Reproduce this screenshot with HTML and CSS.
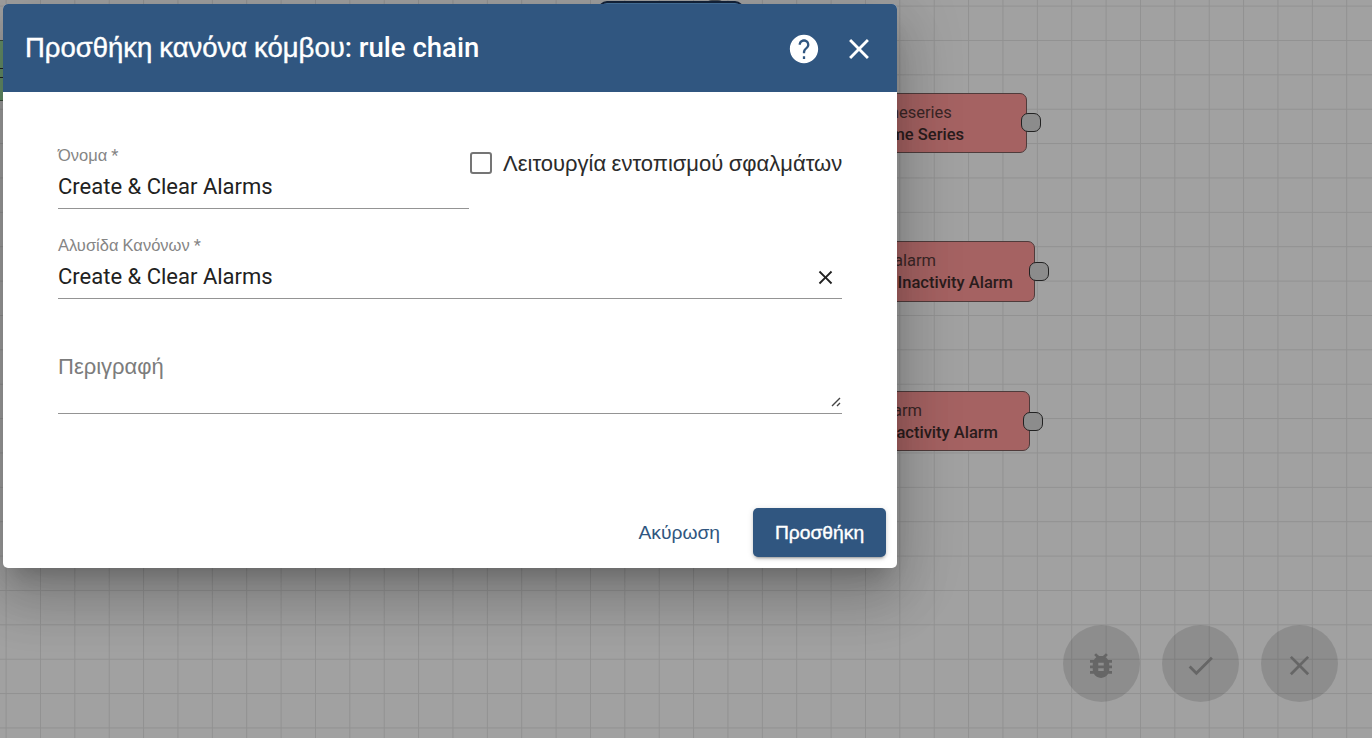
FILE: index.html
```html
<!DOCTYPE html>
<html lang="el">
<head>
<meta charset="utf-8">
<title>Προσθήκη κανόνα κόμβου</title>
<link rel="stylesheet" href="styles.css">
</head>
<body>
<main class="canvas">
  <div class="node node-input"><i class="port"></i></div>
  <div class="node node-top"></div>
  <i class="port port-top"></i>
  <div class="node node-save"><span>save timeseries</span><b>Save Time Series</b><i class="port"></i></div>
  <div class="node node-create"><span>create alarm</span><b>Create Inactivity Alarm</b><i class="port"></i></div>
  <div class="node node-clear"><span>clear alarm</span><b>Clear Inactivity Alarm</b><i class="port"></i></div>
  <div class="fabs">
    <span class="fab"><svg viewBox="0 0 24 24"><path d="M20 8h-2.81c-.45-.78-1.07-1.45-1.82-1.96L17 4.41 15.59 3l-2.17 2.17C12.96 5.06 12.49 5 12 5s-.96.06-1.41.17L8.41 3 7 4.41l1.62 1.63C7.88 6.55 7.26 7.22 6.81 8H4v2h2.09c-.05.33-.09.66-.09 1v1H4v2h2v1c0 .34.04.67.09 1H4v2h2.81c1.04 1.79 2.97 3 5.19 3s4.15-1.21 5.19-3H20v-2h-2.09c.05-.33.09-.66.09-1v-1h2v-2h-2v-1c0-.34-.04-.67-.09-1H20V8zm-6 8h-4v-2h4v2zm0-4h-4v-2h4v2z"/></svg></span>
    <span class="fab"><svg viewBox="0 0 24 24"><path d="M9 16.17L4.83 12l-1.42 1.41L9 19 21 7l-1.41-1.41z"/></svg></span>
    <span class="fab"><svg viewBox="0 0 24 24"><path d="M19 6.41L17.59 5 12 10.59 6.41 5 5 6.41 10.59 12 5 17.59 6.41 19 12 13.41 17.59 19 19 17.59 13.41 12z"/></svg></span>
  </div>
</main>
<section class="dialog">
  <header class="toolbar">
    <h1><span class="greek title-main">Προσθήκη κανόνα κόμβου</span><span class="title-type">: rule chain</span></h1>
    <svg class="help" viewBox="0 0 24 24"><path d="M12 2C6.48 2 2 6.48 2 12s4.48 10 10 10 10-4.48 10-10S17.52 2 12 2zm.8 17h-1.6v-1.8h1.6V19zm2.07-7.75l-.9.92C13.25 12.9 12.8 13.5 12.8 15h-1.6v-.5c0-1.1.45-2.1 1.17-2.83l1.24-1.26c.37-.36.59-.86.59-1.41 0-1.3-1-2.2-2.2-2.2S9.8 7.7 9.8 9H8.2c0-2.21 1.69-3.8 3.8-3.8s3.8 1.59 3.8 3.8c0 .88-.36 1.68-.93 2.25z"/></svg>
    <svg class="close" viewBox="0 0 24 24"><path d="M19 6.41L17.59 5 12 10.59 6.41 5 5 6.41 10.59 12 5 17.59 6.41 19 12 13.41 17.59 19 19 17.59 13.41 12z"/></svg>
  </header>
  <div class="content">
    <div class="row">
      <div class="field name"><label><span class="greek">Όνομα</span> *</label><div class="value">Create &amp; Clear Alarms</div></div>
      <div class="check"><i class="box"></i><span class="greek check-text">Λειτουργία εντοπισμού σφαλμάτων</span></div>
    </div>
    <div class="field chain"><label><span class="greek">Αλυσίδα Κανόνων</span> *</label><div class="value">Create &amp; Clear Alarms<svg viewBox="0 0 24 24"><path d="M19 6.41L17.59 5 12 10.59 6.41 5 5 6.41 10.59 12 5 17.59 6.41 19 12 13.41 17.59 19 19 17.59 13.41 12z"/></svg></div></div>
    <div class="area"><span class="greek area-text">Περιγραφή</span><svg viewBox="0 0 10 10"><path d="M1 9L9 1M6 9L9 6"/></svg></div>
  </div>
  <footer class="actions"><span class="greek cancel">Ακύρωση</span><span class="add"><span class="greek add-text">Προσθήκη</span></span></footer>
</section>
</body>
</html>
```
FILE: styles.css
```css
* { box-sizing: border-box; }
body { margin: 0; font-family: Roboto, "Liberation Sans", sans-serif; overflow: hidden; }
h1 { margin: 0; font-size: 27.5px; font-weight: 500; line-height: 36px; white-space: nowrap; }
svg { display: block; fill: currentColor; }
.greek { font-family: "Liberation Sans", Arial, sans-serif; word-spacing: -.03em; }
.canvas {
  position: relative; width: 1372px; height: 738px; overflow: hidden;
  background-color: #a1a1a1;
  background-image: linear-gradient(90deg, #919191 1.375px, transparent 1.375px), linear-gradient(#919191 1.375px, transparent 1.375px);
  background-size: 34.375px 34.375px;
  background-position: 5.6px 5.6px;
}
.node {
  position: absolute; display: flex; flex-direction: column; justify-content: center;
  align-items: flex-end; height: 61px; border: 1px solid #4f3b3b; border-radius: 7px;
  background: #a56262; color: #2a1c1c; font-size: 16.5px; line-height: 22px; white-space: nowrap;
}
.node span { align-self: flex-start; color: #3a2626; }
.node b { font-weight: 500; }
.port { position: absolute; width: 20px; height: 19px; border: 1.4px solid #222; border-radius: 7px; background: #8c8c8c; }
.node .port { right: -15px; top: 19px; }
.node-save { left: 798px; top: 93px; width: 229px; height: 60px; padding: 1px 62px 0 38px; }
.node-create { left: 794px; top: 241px; width: 241px; padding: 0 21px 0 49px; }
.node-create .port { top: 20px; }
.node-clear { left: 786px; top: 391px; width: 244px; height: 60px; padding: 1px 31px 0 53px; }
.node-clear .port { right: -14px; top: 20px; }
.node-input { left: -100px; top: 40px; width: 140px; background: #67916a; border-color: #3b4e3c; }
.node-input .port { right: 30px; top: 27px; width: 120px; height: 10px; border-radius: 0; background: #67916a; }
.node-top { left: 598px; top: 1px; width: 146px; background: #48739e; border: 2px solid #14233b; border-radius: 9px; }
.port-top { left: 705px; top: -18px; border: 0; background: #4a4f54; }
.fabs { position: absolute; left: 1063px; top: 625px; display: flex; gap: 22px; }
.fab { width: 77px; height: 77px; border-radius: 50%; background: rgba(0,0,0,.12); color: #666; display: flex; align-items: center; justify-content: center; }
.fab svg { width: 33px; height: 33px; transform: translateY(2px); }
.fab:nth-child(1) svg { transform: translate(-.5px, 2px); }
.dialog {
  position: absolute; left: 3px; top: 4px; width: 894px; height: 564px; display: flex; flex-direction: column;
  border-radius: 5px; overflow: hidden; background: #fff; color: #212121;
  box-shadow: 0 15px 21px -10px rgba(0,0,0,.2), 0 33px 52px 4px rgba(0,0,0,.14), 0 12px 63px 11px rgba(0,0,0,.12);
}
.toolbar { height: 88px; flex: none; display: flex; align-items: center; padding: 0 21.5px 0 22px; background: #305680; color: #fff; }
.toolbar h1 { flex: 1; }
.title-main { font-weight: 400; -webkit-text-stroke: .4px currentColor; }
.toolbar svg { width: 34px; height: 34px; margin-top: 2px; }
.toolbar .close { margin-left: 21px; }
.content { flex: 1; padding: 52px 55px 0; }
.row { display: flex; height: 90px; }
.field { height: 65px; border-bottom: 1px solid #949494; }
.name { width: 411px; flex: none; }
.field label { display: block; height: 22px; line-height: 23px; font-size: 16.5px; color: #858585; }
.value { display: flex; justify-content: space-between; height: 42px; line-height: 42px; font-size: 22px; }
.value svg { width: 23px; height: 23px; margin: 10px 5px 0 0; }
.check { display: flex; align-items: center; gap: 11px; height: 38px; margin-left: 1px; font-size: 22px; white-space: nowrap; }
.check-text { padding-top: 2px; color: #2b2b2b; }
.box { width: 22px; height: 22px; border: 2px solid #757575; border-radius: 3px; }
.area { display: flex; justify-content: space-between; align-items: flex-end; height: 65px; margin-top: 50px; border-bottom: 1px solid #949494; color: #7c7c7c; font-size: 22px; }
.area-text { align-self: flex-start; line-height: 36px; }
.area svg { width: 10px; height: 10px; margin: 0 1px 6px 0; stroke: #444; stroke-width: 1.4; }
.actions { display: flex; justify-content: flex-end; align-items: center; height: 49px; flex: none; margin: 0 11px 11px; font-size: 19.25px; color: #305680; }
.cancel { margin-right: 33px; }
.add { width: 133px; height: 49px; border-radius: 5px; display: flex; align-items: center; justify-content: center; background: #305680; color: #fff; box-shadow: 0 4px 2px -3px rgba(0,0,0,.2), 0 2px 3px rgba(0,0,0,.14), 0 1px 6px rgba(0,0,0,.12); }
.add-text { -webkit-text-stroke: .4px currentColor; }
```
